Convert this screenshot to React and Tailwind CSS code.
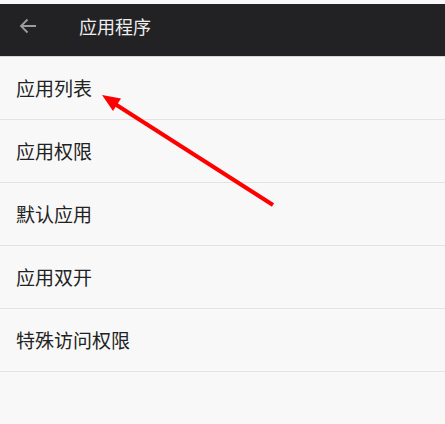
const items = ['应用列表', '应用权限', '默认应用', '应用双开', '特殊访问权限']

export default function App() {
  return (
    <main
      className="relative h-[424px] w-[445px] overflow-hidden bg-[#f8f8f8] pt-[4px]"
      style={{ fontFamily: '"Noto Sans CJK SC", "Noto Sans", sans-serif' }}
    >
      <header className="flex h-[53px] items-center border-b border-[#d6d6d6] bg-[#222224] pb-[8px]">
        <svg width="18" height="16" viewBox="0 0 18 16" className="ml-[19px]">
          <path d="M17 8H2M8.5 1.5L2 8l6.5 6.5" fill="none" stroke="#9c9c9c" strokeWidth="1.8" />
        </svg>
        <h1 className="ml-[42px] text-[18px] text-[#eeeeee]">应用程序</h1>
      </header>

      <ul>
        {items.map((label) => (
          <li
            key={label}
            className="flex h-[63px] items-center border-b border-[#e3e3e3] pl-[16px] text-[19px] text-[#222222]"
          >
            {label}
          </li>
        ))}
      </ul>

      <svg className="absolute left-0 top-0" width="445" height="424" viewBox="0 0 445 424">
        <line x1="273" y1="205" x2="115" y2="104" stroke="#ff0000" strokeWidth="4" />
        <polygon points="102,95 121,98.5 113,111" fill="#ff0000" />
      </svg>
    </main>
  )
}
